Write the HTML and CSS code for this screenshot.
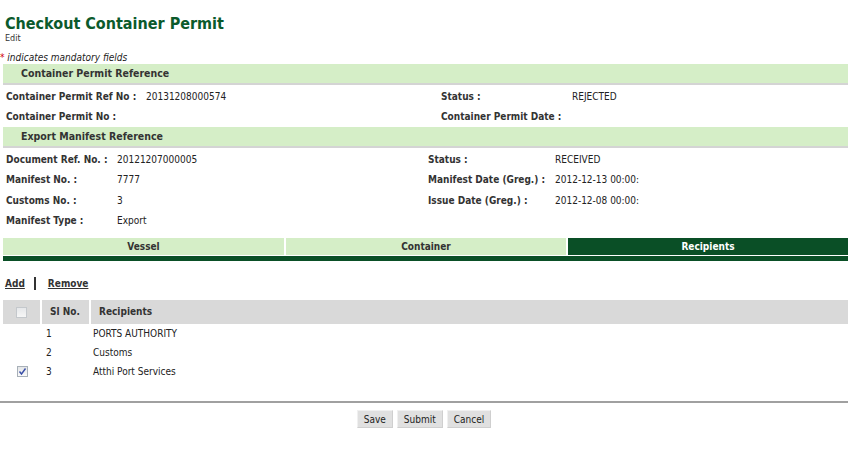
FILE: index.html
```html
<!DOCTYPE html>
<html>
<head>
<meta charset="utf-8">
<link rel="stylesheet" href="styles.css">
</head>
<body>
<div class="page-head">
  <h1 class="title">Checkout Container Permit</h1>
  <div class="subtitle">Edit</div>
</div>
<div class="mandatory"><span class="star">*</span> indicates mandatory fields</div>

<div class="section-head">Container Permit Reference</div>
<div class="fields fields-a">
  <div class="lbl">Container Permit Ref No :</div><div class="val">20131208000574</div>
  <div class="lbl">Status :</div><div class="val">REJECTED</div>
  <div class="lbl">Container Permit No :</div><div class="val"></div>
  <div class="lbl">Container Permit Date :</div><div class="val"></div>
</div>

<div class="section-head">Export Manifest Reference</div>
<div class="fields fields-b">
  <div class="lbl">Document Ref. No. :</div><div class="val">20121207000005</div>
  <div class="lbl">Status :</div><div class="val">RECEIVED</div>
  <div class="lbl">Manifest No. :</div><div class="val">7777</div>
  <div class="lbl">Manifest Date (Greg.) :</div><div class="val">2012-12-13 00:00:</div>
  <div class="lbl">Customs No. :</div><div class="val">3</div>
  <div class="lbl">Issue Date (Greg.) :</div><div class="val">2012-12-08 00:00:</div>
  <div class="lbl">Manifest Type :</div><div class="val">Export</div>
  <div class="lbl"></div><div class="val"></div>
</div>

<div class="tabs">
  <div class="tab">Vessel</div>
  <div class="tab">Container</div>
  <div class="tab active">Recipients</div>
</div>

<div class="actions">
  <a class="link" href="#">Add</a><span class="sep"></span><a class="link" href="#">Remove</a>
</div>

<div class="grid">
  <div class="gh gh-check"><span class="cb cb-disabled"></span></div>
  <div class="gh">Sl No.</div>
  <div class="gh">Recipients</div>

  <div class="gc gc-check"></div><div class="gc">1</div><div class="gc">PORTS AUTHORITY</div>
  <div class="gc gc-check"></div><div class="gc">2</div><div class="gc">Customs</div>
  <div class="gc gc-check"><span class="cb cb-checked"><svg viewBox="0 0 9 9" width="9" height="9"><path d="M1.5 4.5 L3.5 7 L7.5 1.5" fill="none" stroke="#3a4fa8" stroke-width="1.4"/></svg></span></div><div class="gc">3</div><div class="gc">Atthi Port Services</div>
</div>

<div class="footer">
  <button class="btn">Save</button>
  <button class="btn">Submit</button>
  <button class="btn">Cancel</button>
</div>
</body>
</html>
```

FILE: styles.css
```css
html, body {
  margin: 0;
  padding: 0;
  background: #ffffff;
}
body {
  font-family: "DejaVu Sans Condensed", "DejaVu Sans", sans-serif;
  font-size: 10px;
  color: #222222;
  width: 848px;
}
.page-head {
  padding: 14px 0 0 5px;
}
.title {
  margin: 0;
  font-size: 16px;
  line-height: 19px;
  font-weight: bold;
  color: #0b5a2c;
}
.subtitle {
  font-size: 9px;
  line-height: 10px;
  color: #333333;
}
.mandatory {
  margin-top: 9px;
  font-style: italic;
  font-size: 10px;
  line-height: 12px;
  color: #222222;
}
.star {
  color: #d00000;
  font-style: normal;
}
.section-head {
  margin-left: 3px;
  height: 19px;
  line-height: 19px;
  background: #d5eec7;
  border-bottom: 2px solid #d4d4d4;
  padding-left: 18px;
  font-weight: bold;
  font-size: 10.5px;
  color: #333333;
}
.fields {
  display: grid;
  grid-auto-rows: 20.5px;
  align-items: center;
  padding-left: 6px;
  font-size: 10px;
  padding-top: 1px;
}
.fields-a {
  grid-template-columns: 140px 295px 131px 1fr;
}
.fields-b {
  grid-template-columns: 111px 311px 127px 1fr;
}
.lbl {
  font-weight: bold;
  font-size: 10px;
  color: #333333;
  white-space: nowrap;
}
.val {
  color: #222222;
}
.tabs {
  margin: 7px 0 0 3px;
  display: grid;
  grid-template-columns: 281px 280px 1fr;
  gap: 2px;
  border-bottom: 5px solid #0a4f26;
  padding-bottom: 1px;
}
.tab {
  height: 17px;
  line-height: 17px;
  text-align: center;
  background: #d5eec7;
  font-weight: bold;
  font-size: 10px;
  color: #333333;
}
.tab.active {
  background: #0a4f26;
  color: #ffffff;
}
.actions {
  margin: 15px 0 0 5px;
  display: flex;
  align-items: center;
  height: 14px;
}
.link {
  color: #333333;
  font-weight: bold;
  font-size: 10px;
  text-decoration: underline;
}
.sep {
  display: inline-block;
  width: 2px;
  height: 13px;
  background: #333333;
  margin: 0 12px 0 9px;
}
.grid {
  margin: 10px 0 0 3px;
  display: grid;
  grid-template-columns: 37px 47px 1fr;
  column-gap: 2px;
  font-size: 10px;
}
.gh {
  background: #d9d9d9;
  height: 24px;
  line-height: 23px;
  font-weight: bold;
  color: #333333;
  padding-left: 8px;
  font-size: 10px;
}
.gh-check {
  padding-left: 0;
  display: flex;
  align-items: center;
  justify-content: center;
}
.gc {
  height: 19px;
  line-height: 19px;
  color: #222222;
}
.gc:nth-child(3n+2) {
  padding-left: 4px;
}
.gc:nth-child(3n) {
  padding-left: 2px;
}
.gc-check {
  display: flex;
  align-items: center;
  justify-content: flex-start;
  padding-left: 14px;
}
.cb {
  display: inline-block;
  width: 9px;
  height: 9px;
  border: 1px solid #a8b0b8;
  background: linear-gradient(#e4e6e8, #fafafa);
}
.cb-disabled {
  border-color: #c4c8cc;
  background: linear-gradient(#e6e8ea, #f6f6f6);
}
.cb-checked svg {
  display: block;
}
.footer {
  margin-top: 20px;
  border-top: 2px solid #a0a0a0;
  padding-top: 7px;
  display: flex;
  justify-content: center;
  gap: 4px;
}
.btn {
  font-family: "DejaVu Sans Condensed", "DejaVu Sans", sans-serif;
  font-size: 10px;
  color: #222222;
  background: #e0e0e0;
  border: 1px solid #f0f0f0;
  border-right-color: #cfcfcf;
  border-bottom-color: #cfcfcf;
  height: 18px;
  padding: 0 6px;
  margin: 0;
}
```
